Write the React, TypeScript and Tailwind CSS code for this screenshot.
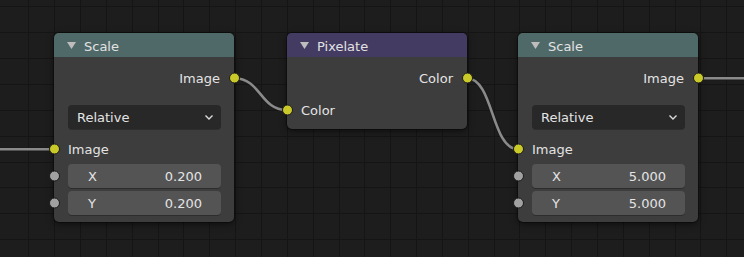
import type { ReactNode } from "react";

const GRID_X = Array.from({ length: 29 }, (_, i) => 28.3 + i * 25.85);
const GRID_Y = Array.from({ length: 10 }, (_, i) => 6.45 + i * 25.85);

const LINKS = [
  "M0 149.3 L54.3 149.3",
  "M234.3 78.3 C 261 78.3, 260 110, 286.7 110",
  "M466.7 78.3 C 494 78.3, 491 149.3, 518.3 149.3",
  "M698.3 78.3 L744 78.3",
];

function Socket({ side, gray }: { side: "left" | "right"; gray?: boolean }) {
  return (
    <span
      className={`absolute top-1/2 h-[11px] w-[11px] -translate-y-1/2 rounded-full border border-[#1b1b1b] ${
        gray ? "bg-[#a1a1a1]" : "bg-[#c9c92a]"
      } ${side === "left" ? "left-[-5.5px]" : "right-[-5.5px]"}`}
    />
  );
}

// nudges DejaVu glyphs down a pixel so they sit centred like Blender's
function Label({ children }: { children: ReactNode }) {
  return <span className="pt-[2px]">{children}</span>;
}

function Node({
  title,
  header,
  className,
  children,
}: {
  title: string;
  header: string;
  className: string;
  children: ReactNode;
}) {
  return (
    <div
      className={`absolute w-[180px] rounded-[5px] bg-[#3d3d3d] shadow-[0_2px_7px_rgba(0,0,0,0.55)] ring-1 ring-black/30 ${className}`}
    >
      <div
        className={`flex h-[24px] items-center gap-[8px] rounded-t-[5px] pl-[13px] text-[13px] text-[#e2e2e2] ${header}`}
      >
        <svg width="9" height="7" viewBox="0 0 9 7" className="mt-[1px]">
          <path d="M0 0 H9 L4.5 7 Z" fill="#bdbdbd" />
        </svg>
        <span className="pt-[3px]">{title}</span>
      </div>
      {children}
    </div>
  );
}

function OutputRow({ label }: { label: string }) {
  return (
    <div className="relative mt-[10px] flex h-[22px] items-center justify-end pr-[14px]">
      <Label>{label}</Label>
      <Socket side="right" />
    </div>
  );
}

function Dropdown() {
  return (
    <div className="ml-[14px] mr-[13px] mt-[16px] flex h-[24px] items-center justify-between rounded-[4px] bg-[#282828] pl-[9px] pr-[7px] shadow-[0_1px_0_rgba(0,0,0,0.25)]">
      <Label>Relative</Label>
      <svg width="10" height="7" viewBox="0 0 10 7" className="mt-[1px]">
        <path d="M1.5 1.5 L5 5 L8.5 1.5" stroke="#dcdcdc" strokeWidth="1.4" fill="none" />
      </svg>
    </div>
  );
}

function Field({ name, value }: { name: string; value: string }) {
  return (
    <div className="relative pl-[14px] pr-[13px]">
      <Socket side="left" gray />
      <div className="flex h-[24px] items-center justify-between rounded-[4px] bg-[#545454] pl-[20px] pr-[19px] shadow-[0_1px_0_rgba(0,0,0,0.25)]">
        <Label>{name}</Label>
        <Label>{value}</Label>
      </div>
    </div>
  );
}

function ScaleNode({ className, value }: { className: string; value: string }) {
  return (
    <Node title="Scale" header="bg-[#4f6969]" className={className}>
      <OutputRow label="Image" />
      <Dropdown />
      <div className="relative mt-[9px] flex h-[22px] items-center pl-[14px]">
        <Socket side="left" />
        <Label>Image</Label>
      </div>
      <div className="mt-[4px] flex flex-col gap-[3px] pb-[7px]">
        <Field name="X" value={value} />
        <Field name="Y" value={value} />
      </div>
    </Node>
  );
}

export default function App() {
  return (
    <div className="relative h-[257px] w-[744px] overflow-hidden bg-[#1d1d1d] font-['DejaVu_Sans',sans-serif] text-[13px] text-[#e4e4e4]">
      <svg className="absolute inset-0" width="744" height="257">
        {GRID_X.map((x) => (
          <line key={`x${x}`} x1={Math.round(x) + 0.5} y1="0" x2={Math.round(x) + 0.5} y2="257" stroke="#151515" strokeWidth="1" />
        ))}
        {GRID_Y.map((y) => (
          <line key={`y${y}`} x1="0" y1={Math.round(y) + 0.5} x2="744" y2={Math.round(y) + 0.5} stroke="#151515" strokeWidth="1" />
        ))}
        {LINKS.map((d) => (
          <path key={`o${d}`} d={d} stroke="#1a1a1a" strokeOpacity="0.7" strokeWidth="4.5" fill="none" />
        ))}
        {LINKS.map((d) => (
          <path key={`l${d}`} d={d} stroke="#8a8a8a" strokeWidth="2.6" fill="none" />
        ))}
      </svg>

      <ScaleNode className="left-[54px] top-[33px]" value="0.200" />

      <Node title="Pixelate" header="bg-[#443b63]" className="left-[287px] top-[33px]">
        <OutputRow label="Color" />
        <div className="relative mb-[8px] mt-[10px] flex h-[22px] items-center pl-[14px]">
          <Socket side="left" />
          <Label>Color</Label>
        </div>
      </Node>

      <ScaleNode className="left-[518px] top-[33px]" value="5.000" />
    </div>
  );
}
